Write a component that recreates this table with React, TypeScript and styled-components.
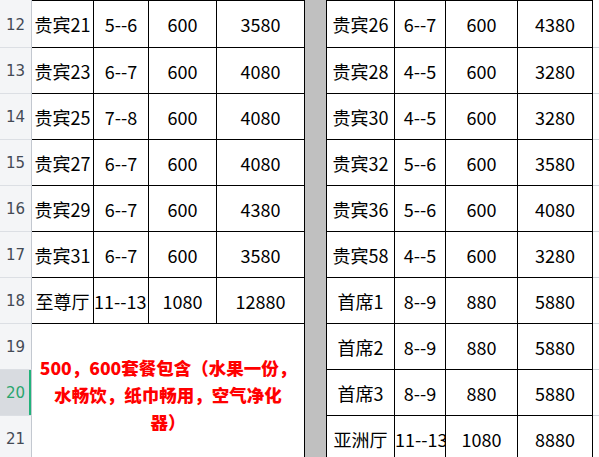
import * as React from "react";
import styled, { createGlobalStyle } from "styled-components";

const GlobalStyle = createGlobalStyle`
    html, body {
        margin: 0;
        padding: 0;
        background: #ffffff;
        overflow: hidden;
    }
`

// the visible part of the sheet: row heads, left table, grey spacer column, right table
const Sheet = styled.div`
    display: grid;
    grid-template-columns: 32px 62px 55px 68px 88px 22px 68px 51px 72px 75px 1fr;
    grid-template-rows: 48px repeat(9, 46px);
    width: 599px;
    height: 457px;
    overflow: hidden;
    font-family: "Noto Sans CJK SC", "Noto Sans", sans-serif;
    font-size: 18px;
    color: #000;
`

const RowHead = styled.div<{ $active?: boolean; $first?: boolean }>`
    grid-column: 1;
    box-sizing: border-box;
    display: flex;
    align-items: center;
    justify-content: center;
    background: ${p => (p.$active ? "#d8dbe0" : "#f4f5f7")};
    color: ${p => (p.$active ? "#2aa56e" : "#444a55")};
    border-right: 1px solid #c3c8d0;
    border-bottom: 1px solid #dcdfe4;
    box-shadow: ${p => (p.$active ? "inset -2px 0 0 #21b27a" : "none")};
    font-family: "DejaVu Sans", sans-serif;
    font-size: 15px;
    padding-top: ${p => (p.$first ? "2px" : "0")};
`

const Cell = styled.div<{ $first?: boolean; $clip?: boolean }>`
    box-sizing: border-box;
    display: flex;
    align-items: center;
    justify-content: ${p => (p.$clip ? "flex-start" : "center")};
    white-space: nowrap;
    overflow: hidden;
    border-right: 1px solid #000;
    border-bottom: 1px solid #000;
    border-top: ${p => (p.$first ? "1px solid #000" : "none")};
`

const Divider = styled.div`
    grid-column: 6;
    grid-row: 1 / -1;
    background: #c0c0c0;
    border-right: 1px solid #000;
    box-sizing: border-box;
`

const Note = styled.div`
    grid-column: 2 / 6;
    grid-row: 8 / 11;
    box-sizing: border-box;
    border-right: 1px solid #000;
    display: flex;
    flex-direction: column;
    align-items: center;
    justify-content: center;
    padding-top: 2px;
    color: #ff0000;
    font-weight: 900;
    font-size: 17.5px;
    line-height: 27px;
    white-space: nowrap;
`

const Spare = styled.div`
    grid-column: 11;
    box-sizing: border-box;
    border-bottom: 1px solid #d0d4da;
`

type Row = { n: number; left?: string[]; right: string[] }

const rows: Row[] = [
    { n: 12, left: ["贵宾21", "5--6", "600", "3580"], right: ["贵宾26", "6--7", "600", "4380"] },
    { n: 13, left: ["贵宾23", "6--7", "600", "4080"], right: ["贵宾28", "4--5", "600", "3280"] },
    { n: 14, left: ["贵宾25", "7--8", "600", "4080"], right: ["贵宾30", "4--5", "600", "3280"] },
    { n: 15, left: ["贵宾27", "6--7", "600", "4080"], right: ["贵宾32", "5--6", "600", "3580"] },
    { n: 16, left: ["贵宾29", "6--7", "600", "4380"], right: ["贵宾36", "5--6", "600", "4080"] },
    { n: 17, left: ["贵宾31", "6--7", "600", "3580"], right: ["贵宾58", "4--5", "600", "3280"] },
    { n: 18, left: ["至尊厅", "11--13", "1080", "12880"], right: ["首席1", "8--9", "880", "5880"] },
    { n: 19, right: ["首席2", "8--9", "880", "5880"] },
    { n: 20, right: ["首席3", "8--9", "880", "5880"] },
    { n: 21, right: ["亚洲厅", "11--13", "1080", "8880"] },
]

// excel shows over-long numbers starting at the left edge, cut off on the right
const tooWide = (s: string) => s.length > 5 && !/[\u4e00-\u9fff]/.test(s)

export default function App() {
    return (
        <>
            <GlobalStyle />
            <Sheet>
                <Divider />
                <Note>
                    <span>500，600套餐包含（水果一份，</span>
                    <span>水畅饮，纸巾畅用，空气净化</span>
                    <span>器）</span>
                </Note>
                {rows.map((r, i) => (
                    <React.Fragment key={r.n}>
                        <RowHead $active={r.n === 20} $first={i === 0}>
                            {r.n}
                        </RowHead>
                        {r.left &&
                            r.left.map((v, j) => (
                                <Cell key={"l" + j} $first={i === 0} $clip={tooWide(v)}>
                                    {v}
                                </Cell>
                            ))}
                        {r.right.map((v, j) => (
                            <Cell key={"r" + j} $first={i === 0} $clip={tooWide(v)}>
                                {v}
                            </Cell>
                        ))}
                        <Spare />
                    </React.Fragment>
                ))}
            </Sheet>
        </>
    )
}
